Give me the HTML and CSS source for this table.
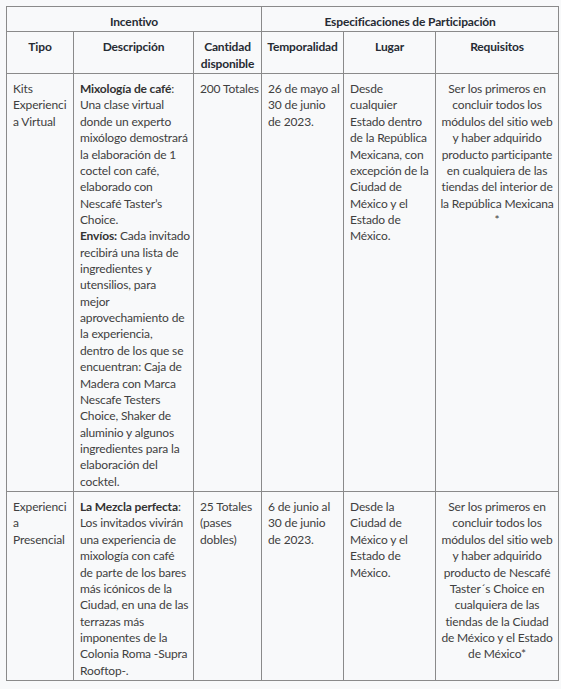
FILE: index.html
```html
<!DOCTYPE html>
<html lang="es">
<head>
<meta charset="utf-8">
<title>Incentivos</title>
<link rel="stylesheet" href="styles.css">
</head>
<body>
<table class="tabla">
  <colgroup>
    <col class="c-tipo">
    <col class="c-desc">
    <col class="c-cant">
    <col class="c-temp">
    <col class="c-lugar">
    <col class="c-req">
  </colgroup>
  <thead>
    <tr>
      <th colspan="3">Incentivo</th>
      <th colspan="3">Especificaciones de Participación</th>
    </tr>
    <tr>
      <th>Tipo</th>
      <th>Descripción</th>
      <th>Cantidad<br>disponible</th>
      <th>Temporalidad</th>
      <th>Lugar</th>
      <th>Requisitos</th>
    </tr>
  </thead>
  <tbody>
    <tr>
      <td>Kits<br>Experienci<br>a Virtual</td>
      <td><b>Mixología de café</b>:<br>Una clase virtual<br>donde un experto<br>mixólogo demostrará<br>la elaboración de 1<br>coctel con café,<br>elaborado con<br>Nescafé Taster’s<br>Choice.<br><b>Envíos:</b> Cada invitado<br>recibirá una lista de<br>ingredientes y<br>utensilios, para<br>mejor<br>aprovechamiento de<br>la experiencia,<br>dentro de los que se<br>encuentran: Caja de<br>Madera con Marca<br>Nescafe Testers<br>Choice, Shaker de<br>aluminio y algunos<br>ingredientes para la<br>elaboración del<br>cocktel.</td>
      <td>200 Totales</td>
      <td>26 de mayo al<br>30 de junio<br>de 2023.</td>
      <td>Desde<br>cualquier<br>Estado dentro<br>de la República<br>Mexicana, con<br>excepción de la<br>Ciudad de<br>México y el<br>Estado de<br>México.</td>
      <td class="req">Ser los primeros en<br>concluir todos los<br>módulos del sitio web<br>y haber adquirido<br>producto participante<br>en cualquiera de las<br>tiendas del interior de<br>la República Mexicana<br>*</td>
    </tr>
    <tr>
      <td>Experienci<br>a<br>Presencial</td>
      <td><b>La Mezcla perfecta</b>:<br>Los invitados vivirán<br>una experiencia de<br>mixología con café<br>de parte de los bares<br>más icónicos de la<br>Ciudad, en una de las<br>terrazas más<br>imponentes de la<br>Colonia Roma -Supra<br>Rooftop-.</td>
      <td>25 Totales<br>(pases<br>dobles)</td>
      <td>6 de junio al<br>30 de junio<br>de 2023.</td>
      <td>Desde la<br>Ciudad de<br>México y el<br>Estado de<br>México.</td>
      <td class="req">Ser los primeros en<br>concluir todos los<br>módulos del sitio web<br>y haber adquirido<br>producto de Nescafé<br>Taster´s Choice en<br>cualquiera de las<br>tiendas de la Ciudad<br>de México y el Estado<br>de México*</td>
    </tr>
  </tbody>
</table>
</body>
</html>
```
FILE: styles.css
```css
html, body {
  margin: 0;
  background: #f8f9fa;
}
body {
  padding: 6px 0 0 6px;
  font-family: "Lato", "Liberation Sans", sans-serif;
  font-size: 12px;
  line-height: 16.36px;
  color: #404040;
  letter-spacing: -0.15px;
}
.tabla {
  border-collapse: collapse;
  table-layout: fixed;
  width: 552px;
}
.c-tipo { width: 67px; }
.c-desc { width: 120px; }
.c-cant { width: 68px; }
.c-temp { width: 82px; }
.c-lugar { width: 92px; }
.c-req { width: 123px; }
.tabla th,
.tabla td {
  border: 1px solid #8a8a8a;
  padding: 7px 3px 1px 6px;
  vertical-align: top;
  white-space: nowrap;
}
.tabla th {
  font-weight: bold;
  color: #262b33;
  text-align: center;
  padding-left: 4px;
  padding-right: 4px;
}
.tabla td {
  text-align: left;
}
.tabla td.req {
  text-align: center;
  padding-left: 4px;
  padding-right: 4px;
}
.tabla b {
  font-weight: bold;
  color: #333;
}
```
